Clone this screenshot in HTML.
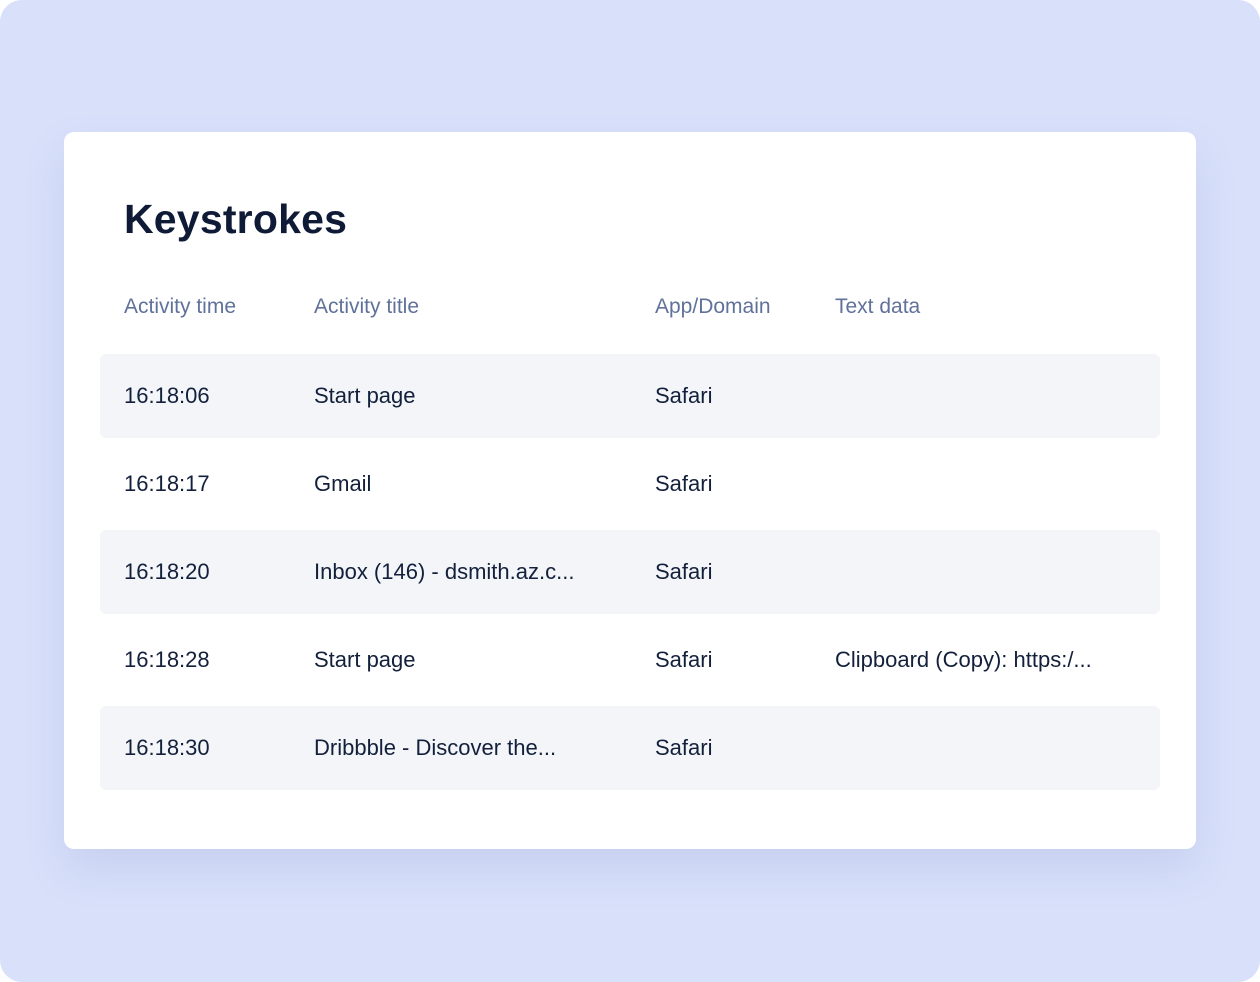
<!DOCTYPE html>
<html><head><meta charset="utf-8"><style>
html,body{margin:0;padding:0}
body{width:1260px;height:982px;background:#fff;font-family:"Liberation Sans",sans-serif;position:relative;overflow:hidden}
.bg{position:absolute;left:0;top:0;width:1260px;height:982px;background:#d8e0fa;border-radius:22px}
.card{position:absolute;left:64px;top:132px;width:1132px;height:717px;background:#fff;border-radius:10px;box-shadow:0 20px 40px rgba(120,140,200,0.18)}
h1{position:absolute;left:60px;top:64px;margin:0;font-size:41px;font-weight:bold;color:#0f1b36;letter-spacing:0.2px}
.hd{position:absolute;top:163px;font-size:21px;color:#60719a}
.row{position:absolute;left:36px;width:1060px;height:84px;border-radius:6px}
.row.g{background:#f3f5f9}
.c{position:absolute;font-size:22px;color:#13203b;line-height:84px;top:0;white-space:nowrap}
</style></head><body>
<div class="bg"></div>
<div class="card">
<h1>Keystrokes</h1>
<div class="hd" style="left:60px">Activity time</div>
<div class="hd" style="left:250px">Activity title</div>
<div class="hd" style="left:591px">App/Domain</div>
<div class="hd" style="left:771px">Text data</div>

<div class="row g" style="top:222px"><span class="c" style="left:24px">16:18:06</span><span class="c" style="left:214px">Start page</span><span class="c" style="left:555px">Safari</span></div>
<div class="row" style="top:310px"><span class="c" style="left:24px">16:18:17</span><span class="c" style="left:214px">Gmail</span><span class="c" style="left:555px">Safari</span></div>
<div class="row g" style="top:398px"><span class="c" style="left:24px">16:18:20</span><span class="c" style="left:214px">Inbox (146) - dsmith.az.c...</span><span class="c" style="left:555px">Safari</span></div>
<div class="row" style="top:486px"><span class="c" style="left:24px">16:18:28</span><span class="c" style="left:214px">Start page</span><span class="c" style="left:555px">Safari</span><span class="c" style="left:735px">Clipboard (Copy): https:/...</span></div>
<div class="row g" style="top:574px"><span class="c" style="left:24px">16:18:30</span><span class="c" style="left:214px">Dribbble - Discover the...</span><span class="c" style="left:555px">Safari</span></div>
</div>
</body></html>
